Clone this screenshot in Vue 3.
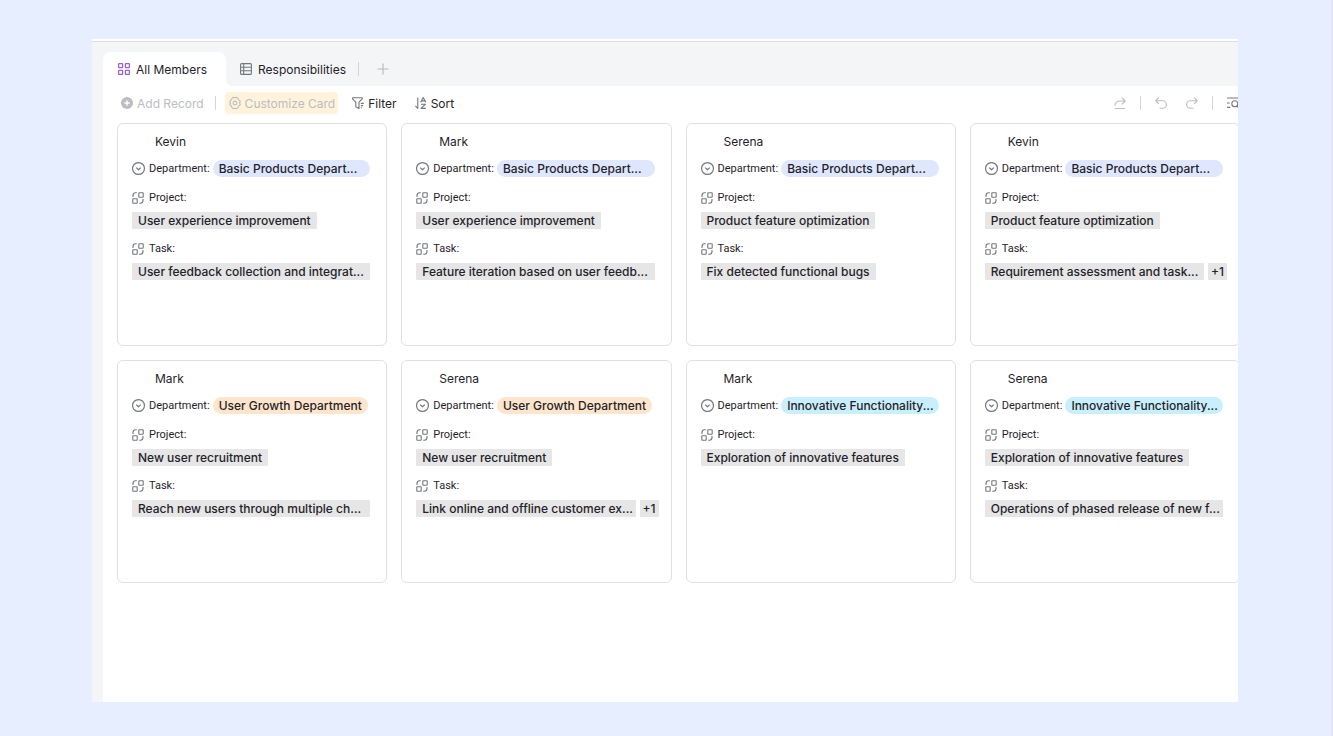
<script setup>
const cards = [
  { name: 'Kevin', dept: 'Basic Products Depart...', tone: 'blue', fill: true, project: 'User experience improvement', task: 'User feedback collection and integrat...', full: true },
  { name: 'Mark', dept: 'Basic Products Depart...', tone: 'blue', fill: true, project: 'User experience improvement', task: 'Feature iteration based on user feedb...', full: true },
  { name: 'Serena', dept: 'Basic Products Depart...', tone: 'blue', fill: true, project: 'Product feature optimization', task: 'Fix detected functional bugs' },
  { name: 'Kevin', dept: 'Basic Products Depart...', tone: 'blue', fill: true, project: 'Product feature optimization', task: 'Requirement assessment and task...', full: true, more: '+1' },
  { name: 'Mark', dept: 'User Growth Department', tone: 'orange', project: 'New user recruitment', task: 'Reach new users through multiple ch...', full: true },
  { name: 'Serena', dept: 'User Growth Department', tone: 'orange', project: 'New user recruitment', task: 'Link online and offline customer ex...', full: true, more: '+1' },
  { name: 'Mark', dept: 'Innovative Functionality...', tone: 'cyan', fill: true, project: 'Exploration of innovative features' },
  { name: 'Serena', dept: 'Innovative Functionality...', tone: 'cyan', fill: true, project: 'Exploration of innovative features', task: 'Operations of phased release of new f...', full: true }
]

function fieldsOf(card) {
  const fields = [{ label: 'Project:', value: card.project }]
  if (card.task) fields.push({ label: 'Task:', value: card.task, full: card.full, more: card.more })
  return fields
}
</script>

<template>
  <div class="page">
    <main class="window">
      <nav class="tabs" aria-label="Views">
        <button class="tab active" type="button">
          <svg class="icon violet" viewBox="0 0 12 12" aria-hidden="true">
            <rect x="0.6" y="0.6" width="4" height="4" rx="0.6" />
            <rect x="7.4" y="0.6" width="4" height="4" rx="0.6" />
            <rect x="0.6" y="7.4" width="4" height="4" rx="0.6" />
            <rect x="7.4" y="7.4" width="4" height="4" rx="0.6" />
          </svg>
          <span>All Members</span>
        </button>
        <button class="tab" type="button">
          <svg class="icon" viewBox="0 0 12 12" aria-hidden="true">
            <rect x="0.6" y="0.6" width="10.8" height="10.8" rx="1" />
            <path d="M0.6 4.2H11.4M0.6 7.8H11.4M3.7 0.6V11.4" />
          </svg>
          <span>Responsibilities</span>
        </button>
        <span class="divider"></span>
        <button class="add-view" type="button" aria-label="Add view">
          <svg class="icon pale" viewBox="0 0 12 12" aria-hidden="true"><path d="M6 0.5V11.5M0.5 6H11.5" /></svg>
        </button>
      </nav>

      <section class="panel">
        <div class="toolbar">
          <button class="tool add muted" type="button" disabled>
            <svg class="icon" viewBox="0 0 12 12" aria-hidden="true">
              <circle class="disc" cx="6" cy="6" r="6" />
              <path class="plus" d="M6 3.3V8.7M3.3 6H8.7" />
            </svg>
            <span>Add Record</span>
          </button>
          <span class="divider"></span>
          <button class="tool customize muted" type="button" disabled>
            <svg class="icon" viewBox="0 0 12 12" aria-hidden="true">
              <path d="M4.7 0.3Q6 1.3 7.3 0.3L8.9 1.2Q9.1 2.9 11.1 3.9V5Q10 6 11.1 7V8.1Q9.1 9.1 8.9 10.8L7.3 11.7Q6 10.7 4.7 11.7L3.1 10.8Q2.9 9.1 0.9 8.1V7Q2 6 0.9 5V3.9Q2.9 2.9 3.1 1.2Z" />
              <circle cx="6" cy="6" r="1.9" />
            </svg>
            <span>Customize Card</span>
          </button>
          <button class="tool filter" type="button">
            <svg class="icon" viewBox="0 0 12 12" aria-hidden="true">
              <path d="M7 8V11.4L3.8 9.8V5.4L0.6 1.9V0.7H10.2V1.9L7 5.2V8M8.8 6.4H11.8M8.8 8.6H11.2M8.8 10.8H10" />
            </svg>
            <span>Filter</span>
          </button>
          <button class="tool sort" type="button">
            <svg class="icon" viewBox="0 0 12 12" aria-hidden="true">
              <path d="M2.8 0.4V11.4L0.4 8.8M5.6 5.2L8.2 0.5L10.8 5.2M6.5 3.9H9.9M6 7.2H10.5L6 11.4H10.9" />
            </svg>
            <span>Sort</span>
          </button>
          <span class="spacer"></span>
          <button class="tool muted" type="button" aria-label="Share" disabled>
            <svg class="icon" viewBox="0 0 12 12" aria-hidden="true">
              <path d="M0.8 8.6Q1.6 4 6.2 4H10.8M7.8 0.6L11.2 4L7.8 7.4M0.6 11.5H11" />
            </svg>
          </button>
          <span class="divider"></span>
          <button class="tool muted" type="button" aria-label="Undo" disabled>
            <svg class="icon" viewBox="0 0 12 12" aria-hidden="true">
              <path d="M3.8 0.6L0.7 3.7L3.8 6.8M0.7 3.7H7.6A3.8 3.8 0 0 1 7.6 11.3H4.6" />
            </svg>
          </button>
          <button class="tool redo muted" type="button" aria-label="Redo" disabled>
            <svg class="icon" viewBox="0 0 12 12" aria-hidden="true">
              <path d="M8.2 0.6L11.3 3.7L8.2 6.8M11.3 3.7H4.4A3.8 3.8 0 0 0 4.4 11.3H7.4" />
            </svg>
          </button>
          <span class="divider"></span>
          <button class="tool find" type="button" aria-label="Find">
            <svg class="icon" viewBox="0 0 12 12" aria-hidden="true">
              <path d="M0 1H12M0 6H2.8M0 10.4H3.2M9.8 9L11.8 11" />
              <circle cx="7.8" cy="6.8" r="3" />
            </svg>
          </button>
        </div>

        <div class="grid">
          <article v-for="(card, i) in cards" :key="i" class="card">
            <h2 class="name">{{ card.name }}</h2>
            <div class="dept">
              <span class="label">
                <svg class="icon" viewBox="0 0 12 12" aria-hidden="true">
                  <circle cx="6" cy="6" r="5.5" />
                  <path d="M3.9 5.2L6 7.2L8.1 5.2" />
                </svg>
                Department:
              </span>
              <span class="pill" :class="[card.tone, { fill: card.fill }]">{{ card.dept }}</span>
            </div>
            <div v-for="field in fieldsOf(card)" :key="field.label" class="field">
              <span class="label">
                <svg class="icon" viewBox="0 0 12 12" aria-hidden="true">
                  <rect x="0.8" y="6.8" width="4.4" height="4.4" rx="0.4" />
                  <rect x="6.8" y="0.8" width="4.4" height="4.4" rx="0.4" />
                  <path d="M1 5V3.4Q1.2 0.9 3.4 0.8H4.8M11 7V8.6Q10.8 11.1 8.6 11.2H7.2" />
                </svg>
                {{ field.label }}
              </span>
              <div class="values" :class="{ wide: field.more }">
                <span class="chip" :class="{ fill: field.full }">{{ field.value }}</span>
                <span v-if="field.more" class="chip more">{{ field.more }}</span>
              </div>
            </div>
          </article>
        </div>
      </section>
    </main>
  </div>
</template>

<style>
body {
  margin: 0;
  background: #e6eeff;
}
</style>

<style scoped>
.page {
  box-sizing: border-box;
  display: flex;
  min-height: 100vh;
  padding: 39px 93px 34px 92px;
  border-right: 2px solid #e3e5f5;
  background: #e6eeff;
  color: #1f2329;
  font-family: Inter, "Liberation Sans", sans-serif;
  font-size: 12px;
}

.window {
  flex: 1;
  min-width: 0;
  display: flex;
  flex-direction: column;
  overflow: hidden;
  box-sizing: border-box;
  border-top: 2px solid #fff;
  background: #f4f5f7;
  padding-left: 11px;
}

button {
  display: flex;
  align-items: center;
  flex: none;
  margin: 0;
  padding: 0;
  border: 0;
  background: none;
  color: inherit;
  font: inherit;
  white-space: nowrap;
}

.icon {
  display: block;
  flex: none;
  width: 12px;
  height: 12px;
  fill: none;
  stroke: #73777e;
  stroke-width: 1.1;
  stroke-linejoin: round;
  overflow: visible;
}

.violet {
  stroke: #9a62cf;
  stroke-width: 1.3;
}

.pale {
  stroke: #b4b7bc;
}

.divider {
  flex: none;
  width: 1px;
  height: 14px;
  background: #d3d5d8;
}

.tabs {
  display: flex;
  align-items: center;
  height: 34px;
  margin-left: -11px;
  padding: 10px 0 0 11px;
  border-top: 1px solid #d9dce0;
}

.tab {
  height: 34px;
  gap: 6px;
  padding: 0 12px 0 14px;
  font-size: 12px;
}

.tab.active {
  position: relative;
  padding: 0 19px 0 15px;
  border-radius: 8px 8px 0 0;
  background: #fff;
}

.tab.active::after {
  content: "";
  position: absolute;
  left: 100%;
  bottom: 0;
  width: 6px;
  height: 6px;
  background: radial-gradient(circle at 100% 0, transparent 6px, #fff 6px);
}

.add-view {
  margin-left: 18px;
}

.panel {
  flex: 1;
  padding-left: 14px;
  background: #fff;
}

.toolbar {
  display: flex;
  align-items: center;
  height: 34px;
  padding-left: 4px;
  margin-right: -1px;
}

.tool {
  gap: 4px;
}

.add {
  margin-right: 11px;
}

.muted {
  color: #bbbdc1;
}

.muted .icon {
  stroke: #bbbdc1;
}

.muted .disc {
  fill: #bbbdc1;
  stroke: none;
}

.muted .plus {
  stroke: #fff;
  stroke-width: 1.4;
}

.customize {
  height: 22px;
  margin: 0 14px 0 9px;
  padding: 0 3px 0 4px;
  border-radius: 4px;
  background: #fff3dc;
}

.sort {
  margin-left: 18px;
}

.spacer {
  flex: 1;
}

.toolbar .spacer ~ .divider {
  margin: 0 14px;
}

.redo {
  margin-left: 19px;
}

.grid {
  display: grid;
  grid-template-columns: repeat(4, minmax(0, 1fr));
  gap: 14px;
  margin: 3px -2px 0 0;
}

.card {
  box-sizing: border-box;
  min-height: 223px;
  padding: 8px 16px 8px 14px;
  border: 1px solid #dee0e3;
  border-radius: 6px;
}

.name {
  margin: 0 0 8px 23px;
  font-size: 12px;
  font-weight: 400;
  line-height: 20px;
}

.dept {
  display: flex;
  align-items: center;
  gap: 3px;
  margin-bottom: 12px;
}

.label {
  display: flex;
  flex: none;
  align-items: center;
  gap: 4px;
  font-family: Roboto, Inter, sans-serif;
  font-size: 11px;
  line-height: 17px;
}

.dept .icon {
  width: 13px;
  height: 13px;
}

.field .label {
  gap: 5px;
}

.pill,
.chip {
  box-sizing: border-box;
  padding: 0 6px;
  overflow: hidden;
  font-size: 12px;
  font-weight: 500;
  line-height: 17px;
  white-space: nowrap;
}

.pill {
  border-radius: 9px;
}

.fill {
  flex: 1;
}

.blue {
  background: #dfe7ff;
}

.orange {
  background: #fee5cc;
}

.cyan {
  background: #caeffc;
}

.field {
  margin-bottom: 11px;
}

.values {
  display: flex;
  gap: 4px;
  margin-top: 6px;
}

.wide {
  margin-right: -4px;
}

.chip {
  border-radius: 1px;
  background: #e6e6e6;
}

.more {
  flex: none;
  padding: 0 3px;
}
</style>
